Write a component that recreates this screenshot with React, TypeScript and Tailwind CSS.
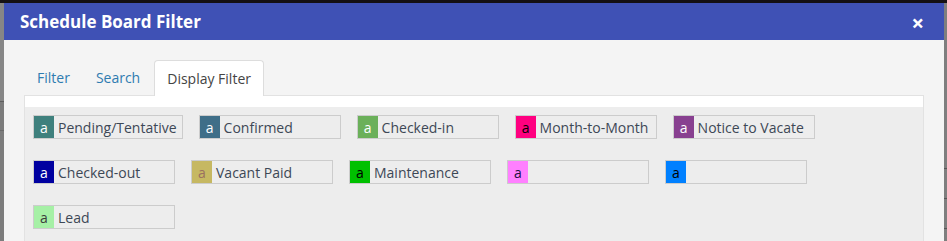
import React from 'react';

type Legend = { label: string; bg: string; fg: string };

// row order as the board shows them
const legends: Legend[] = [
    { label: 'Pending/Tentative', bg: 'bg-[#3f807d]', fg: 'text-white' },
    { label: 'Confirmed', bg: 'bg-[#3f6e88]', fg: 'text-white' },
    { label: 'Checked-in', bg: 'bg-[#6bb05a]', fg: 'text-white' },
    { label: 'Month-to-Month', bg: 'bg-[#ff0080]', fg: 'text-black' },
    { label: 'Notice to Vacate', bg: 'bg-[#884090]', fg: 'text-white' },
    { label: 'Checked-out', bg: 'bg-[#0000a0]', fg: 'text-white' },
    { label: 'Vacant Paid', bg: 'bg-[#c6b862]', fg: 'text-[#9a7060]' },
    { label: 'Maintenance', bg: 'bg-[#00c000]', fg: 'text-black' },
    { label: '', bg: 'bg-[#ff80ff]', fg: 'text-[#201040]' },
    { label: '', bg: 'bg-[#0080ff]', fg: 'text-black' },
    { label: 'Lead', bg: 'bg-[#a6f0a6]', fg: 'text-[#3c3c3c]' },
];

const LegendChip: React.FC<{ item: Legend }> = ({ item }) => (
    <div className="flex h-[24px] min-w-[142px] items-stretch border border-[#cccccc] bg-[#ededed]">
        <span className={`flex w-[20px] items-center justify-center text-[14px] ${item.bg} ${item.fg}`}>a</span>
        <span className="flex items-center pl-[4px] pr-[5px] text-[14px] text-[#3d4856]">{item.label}</span>
    </div>
);

const App: React.FC = () => {
    const tabs = ['Filter', 'Search', 'Display Filter'];
    const activeTab = 'Display Filter';

    return (
        <div className="flex h-[241px] w-[947px] flex-col overflow-hidden bg-[#141014] font-['Open_Sans',sans-serif]">
            <div className="flex h-[241px] shrink-0 pt-[3px]">
                {/* backdrop on the left */}
                <div className="flex w-[4px] shrink-0 flex-col bg-[#7c7c7c]">
                    <div className="h-[99px] border-b border-[#5e5e5e] bg-[#868686]" />
                    <div className="h-[29px] border-b border-[#6a6a6a]" />
                </div>

                <div className="flex w-[940px] shrink-0 flex-col bg-[#f4f4f4]">
                    <div className="flex h-[37px] shrink-0 items-center justify-between bg-[#3f51b5] pl-[16px] pr-[20px]">
                        <h1 className="text-[17px] font-bold text-white">Schedule Board Filter</h1>
                        <button className="text-[22px] leading-none font-bold text-white">×</button>
                    </div>

                    <div className="flex shrink-0 flex-col px-[20px] pt-[20px]">
                        <div className="flex h-[35px] items-stretch">
                            {tabs.map(t => (
                                <div
                                    key={t}
                                    className={
                                        t === activeTab
                                            ? 'relative z-10 -mb-px ml-[1px] flex items-center rounded-t-[4px] border border-b-0 border-[#dddddd] bg-white px-[12px] text-[14px] text-[#444444]'
                                            : 'flex items-center px-[13px] text-[14px] text-[#2e7bb0]'
                                    }
                                >
                                    {t}
                                </div>
                            ))}
                        </div>

                        <div className="border border-[#e2e2e2] bg-white pt-[11px]">
                            <div className="flex flex-wrap gap-x-[16px] gap-y-[21px] bg-[#ededed] p-[8px] pb-[20px]">
                                {legends.map((l, i) => (
                                    <LegendChip key={i} item={l} />
                                ))}
                            </div>
                        </div>
                    </div>
                </div>

                {/* backdrop on the right */}
                <div className="flex w-[3px] shrink-0 flex-col bg-[#7e7e7e]">
                    <div className="h-[166px] border-b border-[#555555]" />
                    <div className="h-[30px] border-b border-[#555555]" />
                    <div className="h-[30px] border-b border-[#555555]" />
                </div>
            </div>
        </div>
    );
};

export default App;
